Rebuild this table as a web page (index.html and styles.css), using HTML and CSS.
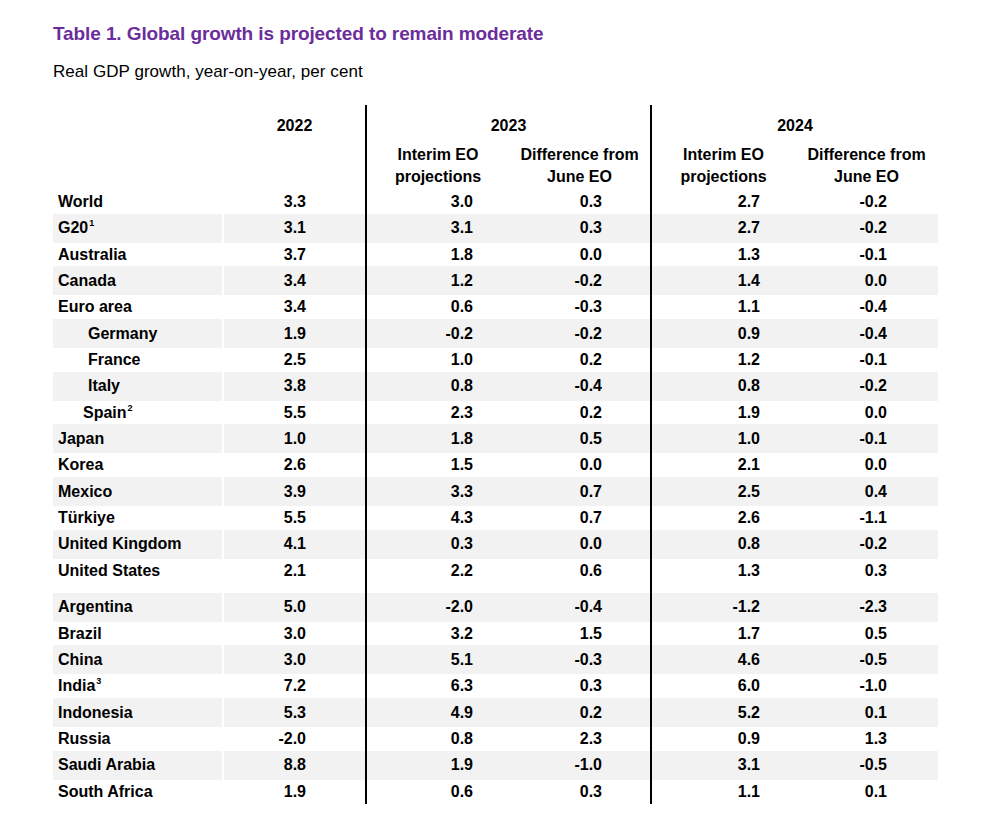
FILE: index.html
```html
<!DOCTYPE html>
<html lang="en">
<head>
<meta charset="utf-8">
<title>Table 1. Global growth is projected to remain moderate</title>
<link rel="stylesheet" href="styles.css">
</head>
<body>
<div class="page">
  <h1 class="title">Table 1. Global growth is projected to remain moderate</h1>
  <p class="subtitle">Real GDP growth, year-on-year, per cent</p>

  <div class="tbl">
    <div class="head">
      <div class="hc h-lab"></div>
      <div class="hc h-22 vline">2022</div>
      <div class="hc h-23 vline">2023</div>
      <div class="hc h-24">2024</div>
      <div class="hc h-sub">Interim EO<br>projections</div>
      <div class="hc h-sub vline">Difference from<br>June EO</div>
      <div class="hc h-sub">Interim EO<br>projections</div>
      <div class="hc h-sub">Difference from<br>June EO</div>
    </div>

    <div class="row"><div class="lab">World</div><div class="v c22">3.3</div><div class="v ci23">3.0</div><div class="v cd23">0.3</div><div class="v ci24">2.7</div><div class="v cd24">-0.2</div></div>
    <div class="row s"><div class="lab">G20<sup>1</sup></div><div class="v c22">3.1</div><div class="v ci23">3.1</div><div class="v cd23">0.3</div><div class="v ci24">2.7</div><div class="v cd24">-0.2</div></div>
    <div class="row"><div class="lab">Australia</div><div class="v c22">3.7</div><div class="v ci23">1.8</div><div class="v cd23">0.0</div><div class="v ci24">1.3</div><div class="v cd24">-0.1</div></div>
    <div class="row s"><div class="lab">Canada</div><div class="v c22">3.4</div><div class="v ci23">1.2</div><div class="v cd23">-0.2</div><div class="v ci24">1.4</div><div class="v cd24">0.0</div></div>
    <div class="row"><div class="lab">Euro area</div><div class="v c22">3.4</div><div class="v ci23">0.6</div><div class="v cd23">-0.3</div><div class="v ci24">1.1</div><div class="v cd24">-0.4</div></div>
    <div class="row s"><div class="lab ind">Germany</div><div class="v c22">1.9</div><div class="v ci23">-0.2</div><div class="v cd23">-0.2</div><div class="v ci24">0.9</div><div class="v cd24">-0.4</div></div>
    <div class="row"><div class="lab ind">France</div><div class="v c22">2.5</div><div class="v ci23">1.0</div><div class="v cd23">0.2</div><div class="v ci24">1.2</div><div class="v cd24">-0.1</div></div>
    <div class="row s"><div class="lab ind">Italy</div><div class="v c22">3.8</div><div class="v ci23">0.8</div><div class="v cd23">-0.4</div><div class="v ci24">0.8</div><div class="v cd24">-0.2</div></div>
    <div class="row"><div class="lab ind2">Spain<sup>2</sup></div><div class="v c22">5.5</div><div class="v ci23">2.3</div><div class="v cd23">0.2</div><div class="v ci24">1.9</div><div class="v cd24">0.0</div></div>
    <div class="row s"><div class="lab">Japan</div><div class="v c22">1.0</div><div class="v ci23">1.8</div><div class="v cd23">0.5</div><div class="v ci24">1.0</div><div class="v cd24">-0.1</div></div>
    <div class="row"><div class="lab">Korea</div><div class="v c22">2.6</div><div class="v ci23">1.5</div><div class="v cd23">0.0</div><div class="v ci24">2.1</div><div class="v cd24">0.0</div></div>
    <div class="row s"><div class="lab">Mexico</div><div class="v c22">3.9</div><div class="v ci23">3.3</div><div class="v cd23">0.7</div><div class="v ci24">2.5</div><div class="v cd24">0.4</div></div>
    <div class="row"><div class="lab">Türkiye</div><div class="v c22">5.5</div><div class="v ci23">4.3</div><div class="v cd23">0.7</div><div class="v ci24">2.6</div><div class="v cd24">-1.1</div></div>
    <div class="row s"><div class="lab">United Kingdom</div><div class="v c22">4.1</div><div class="v ci23">0.3</div><div class="v cd23">0.0</div><div class="v ci24">0.8</div><div class="v cd24">-0.2</div></div>
    <div class="row"><div class="lab">United States</div><div class="v c22">2.1</div><div class="v ci23">2.2</div><div class="v cd23">0.6</div><div class="v ci24">1.3</div><div class="v cd24">0.3</div></div>

    <div class="row gap"><div class="lab"></div><div class="v c22"></div><div class="v ci23"></div><div class="v cd23"></div><div class="v ci24"></div><div class="v cd24"></div></div>

    <div class="row s"><div class="lab">Argentina</div><div class="v c22">5.0</div><div class="v ci23">-2.0</div><div class="v cd23">-0.4</div><div class="v ci24">-1.2</div><div class="v cd24">-2.3</div></div>
    <div class="row"><div class="lab">Brazil</div><div class="v c22">3.0</div><div class="v ci23">3.2</div><div class="v cd23">1.5</div><div class="v ci24">1.7</div><div class="v cd24">0.5</div></div>
    <div class="row s"><div class="lab">China</div><div class="v c22">3.0</div><div class="v ci23">5.1</div><div class="v cd23">-0.3</div><div class="v ci24">4.6</div><div class="v cd24">-0.5</div></div>
    <div class="row"><div class="lab">India<sup>3</sup></div><div class="v c22">7.2</div><div class="v ci23">6.3</div><div class="v cd23">0.3</div><div class="v ci24">6.0</div><div class="v cd24">-1.0</div></div>
    <div class="row s"><div class="lab">Indonesia</div><div class="v c22">5.3</div><div class="v ci23">4.9</div><div class="v cd23">0.2</div><div class="v ci24">5.2</div><div class="v cd24">0.1</div></div>
    <div class="row"><div class="lab">Russia</div><div class="v c22">-2.0</div><div class="v ci23">0.8</div><div class="v cd23">2.3</div><div class="v ci24">0.9</div><div class="v cd24">1.3</div></div>
    <div class="row s"><div class="lab">Saudi Arabia</div><div class="v c22">8.8</div><div class="v ci23">1.9</div><div class="v cd23">-1.0</div><div class="v ci24">3.1</div><div class="v cd24">-0.5</div></div>
    <div class="row"><div class="lab">South Africa</div><div class="v c22">1.9</div><div class="v ci23">0.6</div><div class="v cd23">0.3</div><div class="v ci24">1.1</div><div class="v cd24">0.1</div></div>
  </div>
</div>
</body>
</html>
```

FILE: styles.css
```css
* { box-sizing: border-box; }

html, body {
  margin: 0;
  padding: 0;
  background: #ffffff;
}

body {
  font-family: "Liberation Sans", Arial, sans-serif;
  color: #000000;
}

.page {
  padding: 22px 0 0 53px;
}

.title {
  margin: 0;
  font-size: 19px;
  line-height: 24px;
  font-weight: 700;
  color: #6c2d9c;
  letter-spacing: -0.1px;
}

.subtitle {
  margin: 15px 0 0 0;
  font-size: 17px;
  line-height: 22px;
  font-weight: 400;
  letter-spacing: 0.05px;
}

.tbl {
  margin-top: 22px;
  width: 885px;
  font-size: 16px;
  font-weight: 700;
}

.head {
  display: grid;
  grid-template-columns: 171px 143px 142px 143px 143px 143px;
  grid-template-rows: 36px 49px;
}

.hc {
  text-align: center;
  line-height: 20px;
}

.h-lab { grid-column: 1; grid-row: 1 / span 2; }
.h-22 { grid-column: 2; grid-row: 1 / span 2; padding-top: 11px; }
.h-23 { grid-column: 3 / span 2; grid-row: 1; padding-top: 11px; }
.h-24 { grid-column: 5 / span 2; grid-row: 1; padding-top: 11px; }
.h-sub { grid-row: 2; line-height: 22px; padding-top: 3px; }

.vline { border-right: 2px solid #000000; }

.row {
  display: grid;
  grid-template-columns: 171px 143px 142px 143px 143px 143px;
  height: 23.7px;
  line-height: 20px;
}

.row.s {
  height: 29px;
  background: #f2f2f2;
}

.row.gap { height: 10.3px; }

.row > div {
  display: flex;
  align-items: center;
}

.lab {
  padding-left: 5px;
  border-right: 2px solid #ffffff;
  white-space: nowrap;
}

.lab.ind { padding-left: 35px; }
.lab.ind2 { padding-left: 30px; }

.lab sup {
  font-size: 9px;
  line-height: 0;
  position: relative;
  top: -5px;
  vertical-align: baseline;
  margin-left: 1px;
}

.v { justify-content: flex-end; }

.c22 { padding-right: 59px; border-right: 2px solid #000000; }
.ci23 { padding-right: 36px; }
.cd23 { padding-right: 48px; border-right: 2px solid #000000; }
.ci24 { padding-right: 35px; }
.cd24 { padding-right: 51px; }
```
